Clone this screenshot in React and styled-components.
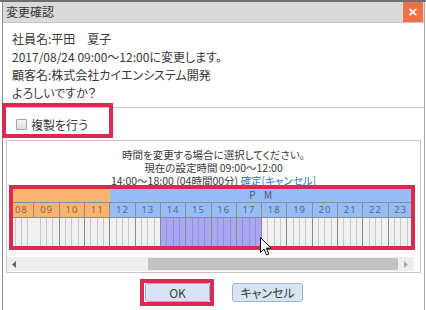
import styled, { createGlobalStyle } from 'styled-components'

const HOURS = Array.from({ length: 24 }, (_, i) => i)
const QUARTERS = [0, 1, 2, 3]
const SEL_FROM = 14
const SEL_TO = 18
const HOUR_W = 25.3

const pad = n => String(n).padStart(2, '0')

const GlobalStyle = createGlobalStyle`
  html, body {
    margin: 0;
    padding: 0;
    background: #fff;
    overflow: hidden;
  }
  body {
    font-family: 'Noto Sans CJK JP', 'Noto Sans', sans-serif;
    font-feature-settings: 'palt';
    color: #333;
  }
`

const App = () => {
	return (
		<Page>
			<GlobalStyle />
			<Dialog>
				<TitleBar>
					<Title>変更確認</Title>
					<CloseButton>×</CloseButton>
				</TitleBar>
				<Message>
					<div>社員名:平田　夏子</div>
					<div>2017/08/24 09:00～12:00に変更します。</div>
					<div>顧客名:株式会社カイエンシステム開発</div>
					<div>よろしいですか？</div>
				</Message>
				<CheckRow>
					<CheckBox />
					<CheckLabel>複製を行う</CheckLabel>
					<Highlight $left={-1} $top={-5} $width={111} $height={35} />
				</CheckRow>
				<Panel>
					<Guide>
						<div>時間を変更する場合に選択してください。</div>
						<div>現在の設定時間 09:00～12:00</div>
						<div>
							14:00～18:00 (04時間00分) <Link>確定[キャンセル]</Link>
						</div>
					</Guide>
					<GridFrame>
						<GridViewport>
							<GridContent>
								<PeriodRow>
									<Period $pm={false}>A M</Period>
									<Period $pm>P M</Period>
								</PeriodRow>
								<HourRow>
									{HOURS.map(h => (
										<HourLabel key={h} $pm={h >= 12}>{pad(h)}</HourLabel>
									))}
								</HourRow>
								<CellRow>
									{HOURS.map(h => (
										<HourCell key={h}>
											{QUARTERS.map(q => (
												<Quarter key={q} $on={h >= SEL_FROM && h < SEL_TO} />
											))}
										</HourCell>
									))}
								</CellRow>
							</GridContent>
						</GridViewport>
						<Highlight $left={-1} $top={-3} $width={406} $height={65} />
						<Cursor viewBox='0 0 12 19' width='12' height='19'>
							<path d='M0.5 0.5 L0.5 15.5 L4 12 L6.5 18 L8.8 17 L6.4 11.2 L11 11.2 Z' fill='#fff' stroke='#000' strokeWidth='1' strokeLinejoin='miter' />
						</Cursor>
					</GridFrame>
					<ScrollBar>
						<ScrollArrow>
							<svg width='4' height='7' viewBox='0 0 4 7'><path d='M4 0 L0 3.5 L4 7 Z' fill='#606060' /></svg>
						</ScrollArrow>
						<Track>
							<Thumb />
						</Track>
						<ScrollArrow $wide>
							<svg width='4' height='7' viewBox='0 0 4 7'><path d='M0 0 L4 3.5 L0 7 Z' fill='#a8a8a8' /></svg>
						</ScrollArrow>
					</ScrollBar>
				</Panel>
				<ButtonBar>
					<ButtonWrap>
						<Button $w={65}>OK</Button>
						<Highlight $left={-5} $top={-4} $width={74} $height={27} />
					</ButtonWrap>
					<Button $w={71}>キャンセル</Button>
				</ButtonBar>
			</Dialog>
		</Page>
	)
}

const Page = styled.div`
	width: 426px;
	height: 310px;
	box-sizing: border-box;
	border-top: 2px solid #6e6e6e;
	padding-left: 2px;
	display: flex;
`

const Dialog = styled.div`
	width: 423px;
	height: 308px;
	box-sizing: border-box;
	border-left: 1px solid #8a8a8a;
	border-right: 1px solid #a6a6a6;
	display: flex;
	flex-direction: column;
	background: #fff;
`

const TitleBar = styled.div`
	height: 20px;
	display: flex;
	align-items: center;
	justify-content: space-between;
	background: #dadada;
	border-bottom: 1px solid #c4c4c4;
	padding-left: 3px;
`

const Title = styled.span`
	font-size: 12px;
	color: #333;
	line-height: 20px;
`

const CloseButton = styled.div`
	width: 20px;
	height: 20px;
	margin-right: 1px;
	background: #f07147;
	color: #fff;
	font-family: 'DejaVu Sans', sans-serif;
	font-weight: bold;
	font-size: 13px;
	line-height: 20px;
	text-align: center;
`

const Message = styled.div`
	padding: 7px 9px 5px;
	font-size: 12px;
	line-height: 18px;
	color: #383838;
	border-bottom: 1px solid #c8c8c8;
`

const CheckRow = styled.div`
	position: relative;
	height: 32px;
	display: flex;
	align-items: center;
	gap: 4px;
	padding-left: 13px;
`

const CheckBox = styled.span`
	width: 11px;
	height: 11px;
	box-sizing: border-box;
	border: 1px solid #a4a4a4;
	border-radius: 1px;
	background: linear-gradient(#f6f6f6, #dedede);
`

const CheckLabel = styled.span`
	font-size: 12px;
	color: #383838;
`

const Highlight = styled.div`
	position: absolute;
	left: ${p => p.$left}px;
	top: ${p => p.$top}px;
	width: ${p => p.$width}px;
	height: ${p => p.$height}px;
	box-sizing: border-box;
	border: 4px solid #d92a50;
	pointer-events: none;
`

const Panel = styled.div`
	margin: 0 3px;
	height: 133px;
	box-sizing: border-box;
	border: 1px solid #c6c6c6;
	padding-top: 7px;
	display: flex;
	flex-direction: column;
`

const Guide = styled.div`
	font-size: 10.5px;
	line-height: 13px;
	text-align: center;
	color: #383838;
`

const Link = styled.span`
	color: #3d6fc6;
`

const GridFrame = styled.div`
	position: relative;
	margin: 1px 0 0 3px;
	width: 404px;
`

const GridViewport = styled.div`
	width: 404px;
	overflow: hidden;
	display: flex;
	justify-content: flex-end;
`

const GridContent = styled.div`
	flex-shrink: 0;
	width: ${HOUR_W * 24}px;
	display: flex;
	flex-direction: column;
`

const PeriodRow = styled.div`
	display: flex;
	height: 15px;
	box-sizing: border-box;
	border-bottom: 1px solid #8c8c8c;
`

const Period = styled.div`
	flex: 1;
	background: ${p => (p.$pm ? '#96bdf6' : '#fbb370')};
	color: #4e5a6e;
	font-size: 10px;
	letter-spacing: 3px;
	line-height: 14px;
	text-align: center;
`

const HourRow = styled.div`
	display: flex;
	height: 15px;
	box-sizing: border-box;
	border-bottom: 1px solid #8c8c8c;
`

const HourLabel = styled.div`
	width: ${HOUR_W}px;
	box-sizing: border-box;
	border-right: 1px solid #8c8c8c;
	background: ${p => (p.$pm ? '#96bdf6' : '#fbb370')};
	color: ${p => (p.$pm ? '#56698a' : '#806650')};
	font-family: 'Noto Sans', sans-serif;
	font-size: 9.5px;
	letter-spacing: 1px;
	line-height: 14px;
	text-align: center;
`

const CellRow = styled.div`
	display: flex;
	height: 30px;
`

const HourCell = styled.div`
	width: ${HOUR_W}px;
	box-sizing: border-box;
	border-right: 1px solid #8a8a8a;
	display: flex;
`

const Quarter = styled.div`
	flex: 1;
	background: ${p => (p.$on ? '#aba7f3' : '#f1f1f1')};
	&:not(:last-child) {
		border-right: 1px solid ${p => (p.$on ? '#928edf' : '#cacaca')};
	}
`

const Cursor = styled.svg`
	position: absolute;
	left: 250px;
	top: 49px;
	pointer-events: none;
`

const ScrollBar = styled.div`
	margin: 9px 6px 0 0;
	height: 14px;
	display: flex;
	background: #efefef;
`

const ScrollArrow = styled.div`
	width: ${p => (p.$wide ? 16 : 14)}px;
	display: flex;
	align-items: center;
	justify-content: center;
`

const Track = styled.div`
	flex: 1;
	display: flex;
	justify-content: flex-end;
	padding: 1px 0;
`

const Thumb = styled.div`
	width: 250px;
	background: #c2c2c2;
`

const ButtonBar = styled.div`
	flex: 1;
	display: flex;
	justify-content: center;
	align-items: flex-start;
	gap: 22px;
	padding: 10px 0 0 21px;
`

const ButtonWrap = styled.div`
	position: relative;
	display: flex;
`

const Button = styled.div`
	width: ${p => p.$w}px;
	height: 19px;
	box-sizing: border-box;
	border: 1px solid #9fb4cc;
	border-radius: 3px;
	background: #d6e4f3;
	font-size: 12px;
	line-height: 17px;
	text-align: center;
	color: #383838;
`

export default App
